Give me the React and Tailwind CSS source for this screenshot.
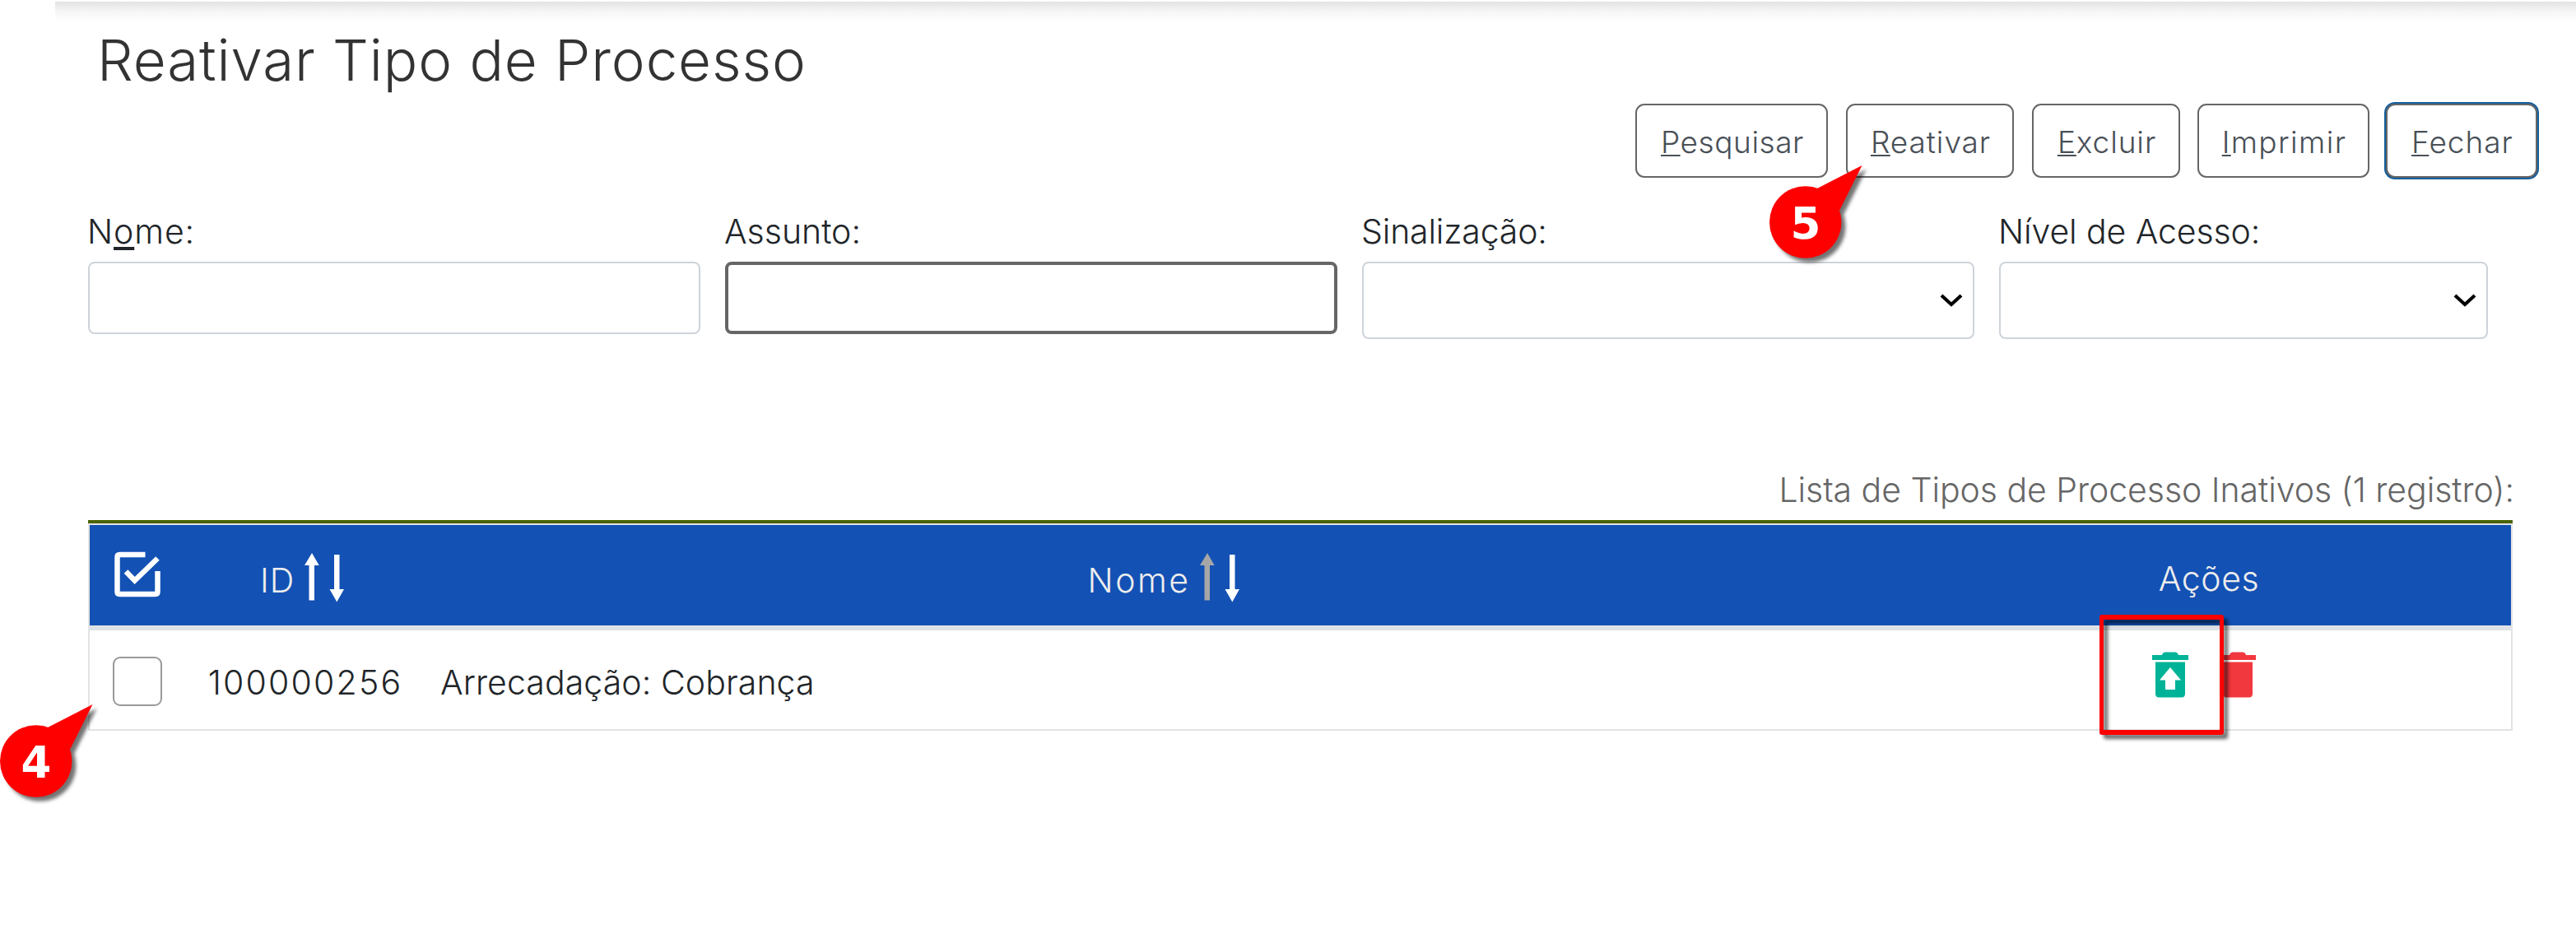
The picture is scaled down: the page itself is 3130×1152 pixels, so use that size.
const columns = "grid grid-cols-[116px_288px_1804px_734px]";

function Button({ hotkey, rest, className }) {
  return (
    <button
      type="button"
      className={`flex h-[90px] shrink-0 items-center justify-center rounded-[11px] border-2 border-[#666666] bg-white pt-[3px] pl-[2px] text-[37px] leading-none text-[#495057] ${className}`}
    >
      <span>
        <span className="underline decoration-2 underline-offset-[2px] [text-decoration-skip-ink:none]">
          {hotkey}
        </span>
        {rest}
      </span>
    </button>
  );
}

function Field({ label, className, children }) {
  return (
    <div className={`flex flex-col gap-3 ${className}`}>
      <label className="-ml-px h-[49px] text-[41px] leading-[49px]">{label}</label>
      {children}
    </div>
  );
}

function Select() {
  return (
    <div className="flex h-[94px] items-center justify-end rounded-lg border-2 border-[#ced4da] bg-white pr-[12px]">
      <svg className="h-[18px] w-[28px]" viewBox="0 0 28 18" fill="none">
        <path d="M2 3l12 11L26 3" stroke="#000" strokeWidth="4.2" />
      </svg>
    </div>
  );
}

function SortArrows({ up = "#fff" }) {
  return (
    <svg className="-mt-[9px] h-[60px] w-[48px]" viewBox="0 0 48 60">
      <path d="M9 0l8.700 15H12v42.500H5.500V15H0z" fill={up} />
      <path d="M36 2h6.500v42H48L39.300 59.500 30.500 44H36z" fill="#fff" />
    </svg>
  );
}

function Callout({ number, className }) {
  return (
    <div className={`pointer-events-none absolute h-[125px] w-[125px] ${className}`}>
      <svg
        className="absolute inset-0 h-full w-full overflow-visible drop-shadow-[5px_5px_2px_rgba(0,0,0,0.55)]"
        viewBox="0 0 125 125"
      >
        <circle cx="43.750" cy="74" r="43.750" fill="#f00" />
        <path d="M112.500 5L58 33 60 75 85 60z" fill="#f00" />
      </svg>
      <span className="absolute top-[46px] left-0 w-[88px] text-center font-['DejaVu_Sans'] text-[53px] leading-[60px] font-bold text-white">
        {number}
      </span>
    </div>
  );
}

export default function App() {
  return (
    <div className="relative flex h-[1152px] w-full flex-col overflow-hidden bg-white font-['Inter',sans-serif] font-light text-[#212529]">
      <div className="mt-[2px] ml-[67px] h-6 shrink-0 bg-linear-to-b from-[#e3e3e3] via-[#f6f6f6] to-white" />
      <h1 className="mt-[7px] pl-[118px] text-[69px] leading-[80px] tracking-[0.9px] text-[#333333]">
        Reativar Tipo de Processo
      </h1>

      <div className="mt-[13px] flex justify-end pr-[47px]">
        <Button hotkey="P" rest="esquisar" className="w-[234px] tracking-[0.55px]" />
        <Button hotkey="R" rest="eativar" className="ml-[22px] w-[204px] tracking-[0.94px]" />
        <Button hotkey="E" rest="xcluir" className="ml-[22px] w-[180px] tracking-[0.9px]" />
        <Button hotkey="I" rest="mprimir" className="ml-[21px] w-[209px] tracking-[1.36px]" />
        <Button
          hotkey="F"
          rest="echar"
          className="ml-5 w-[184px] tracking-[1px] shadow-[0_0_0_2px_#155f9e]"
        />
      </div>

      <div className="mt-[41px] ml-[107px] flex items-start gap-[30px]">
        <Field
          className="w-[744px] tracking-[0.9px]"
          label={
            <>
              N
              <span className="underline decoration-4 underline-offset-[4px] [text-decoration-skip-ink:none]">
                o
              </span>
              me:
            </>
          }
        >
          <div className="h-[88px] rounded-lg border-2 border-[#ced4da] bg-white" />
        </Field>
        <Field className="w-[744px]" label="Assunto:">
          <div className="h-[88px] rounded-lg border-4 border-[#666666] bg-white" />
        </Field>
        <Field className="w-[744px] tracking-[-0.17px]" label="Sinalização:">
          <Select />
        </Field>
        <Field className="w-[594px] tracking-[-0.1px]" label="Nível de Acesso:">
          <Select />
        </Field>
      </div>

      <div className="mt-[153px] mr-[75px] h-[60px] text-right text-[41px] leading-[60px] tracking-[-0.05px] text-[#666666]">
        Lista de Tipos de Processo Inativos (1 registro):
      </div>

      <div className="mt-[7px] ml-[107px] w-[2946px] shrink-0 border-t-4 border-[#4b6300] text-[41px]">
        <div className="border-x-2 border-t-2 border-b-2 border-[#e2e3e5]">
          <div
            className={`${columns} h-[128px] border-b-[6px] border-[#dee2e6] bg-[#1351b4] text-[#ededed]`}
          >
            <div className="flex items-center justify-center">
              <svg className="-mt-[2px] h-14 w-14" viewBox="0 0 56 56" fill="none" stroke="#fff" strokeWidth="6.500">
                <path d="M37.500 4H6.500Q3.500 4 3.500 7v42q0 3 3 3h43q3 0 3-3V24" />
                <path d="M14 24.500l10.700 11L52.500 8.500" />
              </svg>
            </div>
            <div className="flex items-center justify-center gap-[12px] pt-[14px] pr-[4px] tracking-[1px]">
              <span>ID</span>
              <SortArrows />
            </div>
            <div className="flex items-center justify-center gap-[12px] pt-[14px] pr-[2px] tracking-[2.500px]">
              <span>Nome</span>
              <SortArrows up="#a6a6a6" />
            </div>
            <div className="flex items-center justify-center pt-[10px] tracking-[0.6px]">Ações</div>
          </div>

          <div className={`${columns} h-[120px]`}>
            <div className="flex items-center justify-center pt-1">
              <span className="h-[60px] w-[60px] rounded-[9px] border-2 border-[#999999] bg-white" />
            </div>
            <div className="flex items-center justify-center pt-[8px] pl-[4px] tracking-[2.200px]">100000256</div>
            <div className="flex items-center pt-[8px] pl-[22px] tracking-[0.08px]">
              Arrecadação: Cobrança
            </div>
            <div className="flex items-center justify-center gap-[38px] pr-[13px] pb-3">
              <div className="relative z-10 h-14 w-11">
                <svg className="h-14 w-11" viewBox="0 0 44 56">
                  <path
                    d="M0 4h12q1-3.500 4-3.500h12q3 0 4 3.500h12v6H0zM4 12.500h36V51q0 4.500-4.500 4.500h-27Q4 55.500 4 51z"
                    fill="#00b398"
                  />
                  <path d="M22 19l13 15.500h-7V46H16V34.500H9z" fill="#fff" />
                </svg>
                <span className="absolute -top-[45px] -left-[64px] h-[146px] w-[151px] rounded-[3px] border-x-[5.500px] border-y-6 border-[#ff0000] drop-shadow-[5px_5px_2px_rgba(0,0,0,0.6)]" />
              </div>
              <svg className="h-14 w-11" viewBox="0 0 44 56">
                <path
                  d="M0 4h12q1-3.500 4-3.500h12q3 0 4 3.500h12v6H0zM4 12.500h36V51q0 4.500-4.500 4.500h-27Q4 55.500 4 51z"
                  fill="#f2383f"
                />
              </svg>
            </div>
          </div>
        </div>
      </div>

      <Callout number="5" className="top-[196px] left-[2150px]" />
      <Callout number="4" className="top-[851px] left-0" />
    </div>
  );
}
